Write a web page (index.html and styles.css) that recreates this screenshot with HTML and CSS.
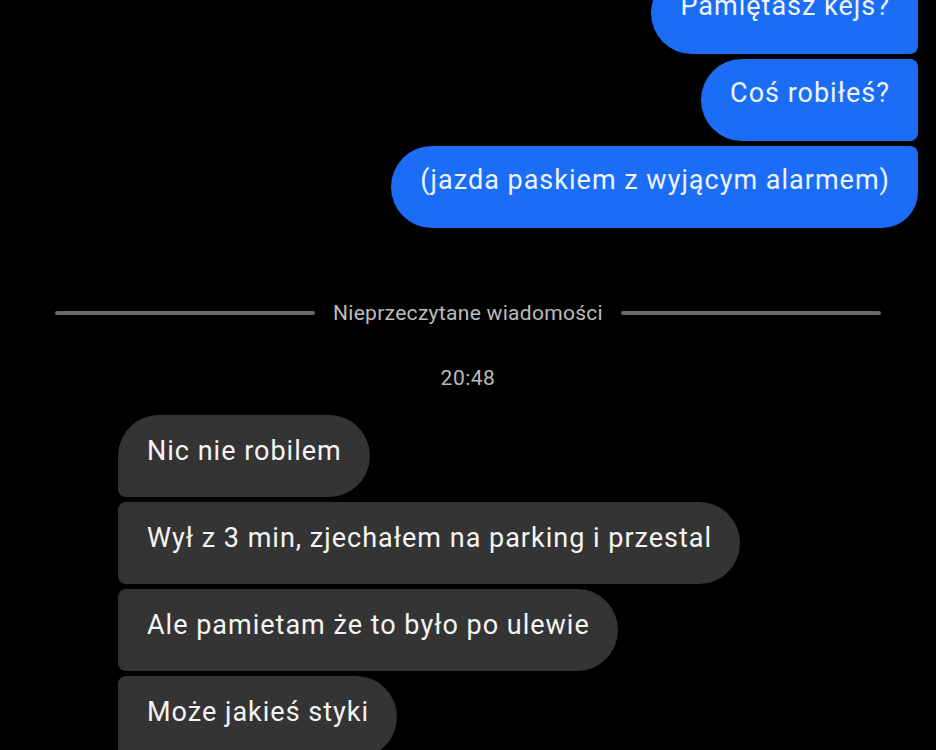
FILE: index.html
```html
<!DOCTYPE html>
<html>
  <head>
    <meta charset="utf-8">
    <link rel="stylesheet" href="styles.css">
  </head>
  <body>
    <div class="chat">

      <div class="group out">
        <div class="bubble first">Pamiętasz kejs?</div>
        <div class="bubble">Coś robiłeś?</div>
        <div class="bubble last">(jazda paskiem z wyjącym alarmem)</div>
      </div>

      <div class="divider">
        <span class="line"></span>
        <span class="label">Nieprzeczytane wiadomości</span>
        <span class="line"></span>
      </div>

      <div class="time">20:48</div>

      <div class="group in">
        <div class="bubble first">Nic nie robilem</div>
        <div class="bubble">Wył z 3 min, zjechałem na parking i przestal</div>
        <div class="bubble">Ale pamietam że to było po ulewie</div>
        <div class="bubble">Może jakieś styki</div>
      </div>

    </div>
  </body>
</html>
```

FILE: styles.css
```css
* {box-sizing: border-box;}

html, body {
  margin: 0;
  height: 100%;
  overflow: hidden;
  background-color: #000;
}

body {
  font-family: Roboto, "Noto Sans", Arial, sans-serif;
}

.chat {
  display: flex;
  flex-direction: column;
  margin-top: -28px;
}

.group {
  display: flex;
  flex-direction: column;
  gap: 5px;
}

.bubble {
  font-size: 27px;
  line-height: 32px;
  letter-spacing: 1px;
  height: 82px;
  padding: 18px 28px 32px 29px;
  white-space: nowrap;
}

/* outgoing, blue, right side */
.out {
  align-items: flex-end;
  padding-right: 18px;
}

.out .bubble {
  background-color: #1b6df6;
  color: #eef3ff;
  border-radius: 41px 8px 8px 41px;
}

.out .bubble.last {
  border-radius: 41px 8px 36px 41px;
}

/* incoming, grey, left side */
.in {
  align-items: flex-start;
  padding-left: 118px;
  margin-top: 25px;
}

.in .bubble {
  background-color: #343434;
  color: #f4f4f4;
  border-radius: 8px 41px 41px 8px;
  padding-top: 20px;
  padding-bottom: 30px;
}

.in .bubble.first {
  border-radius: 41px 41px 41px 8px;
}

.divider {
  display: flex;
  align-items: center;
  gap: 18px;
  padding: 0 55px;
  margin-top: 73px;
  height: 24px;
}

.line {
  flex: 1;
  height: 4px;
  border-radius: 2px;
  background-color: #6a6a6a;
}

.label {
  font-size: 21px;
  letter-spacing: 0.3px;
  color: #bcbcbc;
}

.time {
  margin-top: 41px;
  text-align: center;
  font-size: 21px;
  line-height: 24px;
  letter-spacing: 0.5px;
  color: #bcbcbc;
}
```
